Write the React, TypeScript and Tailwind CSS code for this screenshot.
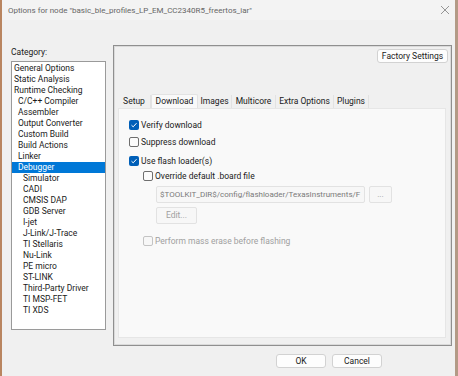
import React from "react";

const items: [string, number][] = [
  ["General Options", 0],
  ["Static Analysis", 0],
  ["Runtime Checking", 0],
  ["C/C++ Compiler", 1],
  ["Assembler", 1],
  ["Output Converter", 1],
  ["Custom Build", 1],
  ["Build Actions", 1],
  ["Linker", 1],
  ["Debugger", 1],
  ["Simulator", 2],
  ["CADI", 2],
  ["CMSIS DAP", 2],
  ["GDB Server", 2],
  ["I-jet", 2],
  ["J-Link/J-Trace", 2],
  ["TI Stellaris", 2],
  ["Nu-Link", 2],
  ["PE micro", 2],
  ["ST-LINK", 2],
  ["Third-Party Driver", 2],
  ["TI MSP-FET", 2],
  ["TI XDS", 2],
];

const indent = ["pl-[2px]", "pl-[6px]", "pl-[11px]"];

const tabs: [string, string][] = [
  ["Setup", "w-[33px]"],
  ["Download", "w-[47px]"],
  ["Images", "w-[34px]"],
  ["Multicore", "w-[44px]"],
  ["Extra Options", "w-[58px]"],
  ["Plugins", "w-[35px]"],
];

const Check = ({ checked, disabled }: { checked?: boolean; disabled?: boolean }) =>
  checked ? (
    <div className="flex h-[10px] w-[10px] items-center justify-center rounded-[2px] bg-[#005fb8]">
      <svg width="8" height="8" viewBox="0 0 8 8">
        <path d="M1.5 4.2 L3.2 5.8 L6.5 2.2" fill="none" stroke="#fff" strokeWidth="1" />
      </svg>
    </div>
  ) : (
    <div
      className={
        disabled
          ? "h-[10px] w-[10px] rounded-[2px] border border-[#c4c4c4] bg-[#f7f7f7]"
          : "h-[10px] w-[10px] rounded-[2px] border border-[#6e6e6e] bg-[#fbfbfb]"
      }
    />
  );

const Row = ({
  label,
  checked,
  disabled,
  className,
}: {
  label: string;
  checked?: boolean;
  disabled?: boolean;
  className: string;
}) => (
  <div className={`flex h-[14px] items-center gap-[2px] ${className}`}>
    <Check checked={checked} disabled={disabled} />
    <span className={disabled ? "text-[#a0a0a0]" : "text-[#1a1a1a]"}>{label}</span>
  </div>
);

export default function App() {
  return (
    <div
      className="flex h-[376px] w-[458px] text-[8.5px] leading-[11px] text-[#1a1a1a]"
      style={{ fontFamily: 'Roboto, "Noto Sans", sans-serif' }}
    >
      <div className="w-[2px] bg-[#b98560]" />
      <div className="flex w-[453px] flex-col bg-[#f0f0f0]">
        {/* title bar */}
        <div className="flex h-[20px] items-center justify-between bg-[#f3f3f3] pl-[6px] pr-[5px]">
          <span className="text-[8px] text-[#666666]">
            Options for node "basic_ble_profiles_LP_EM_CC2340R5_freertos_iar"
          </span>
          <svg width="10" height="10" viewBox="0 0 10 10">
            <path d="M1 1 L9 9 M9 1 L1 9" stroke="#8a8a8a" strokeWidth="0.9" />
          </svg>
        </div>

        <div className="flex">
          {/* category column */}
          <div className="ml-[9px] flex w-[95px] flex-col pt-[25px]">
            <div className="flex h-[14px] items-center">Category:</div>
            <div className="mt-[2px] h-[269px] border border-[#9a9a9a] bg-white pt-[1px]">
              {items.map(([name, lvl]) => (
                <div
                  key={name}
                  className={`flex h-[11px] items-center ${indent[lvl]} ${
                    name === "Debugger" ? "bg-[#0078d7] text-white" : ""
                  }`}
                >
                  {name}
                </div>
              ))}
            </div>
          </div>

          {/* options panel */}
          <div className="ml-[7px] mt-[25px] flex h-[301px] w-[339px] flex-col border border-[#8f8f8f] shadow-[inset_0_0_0_1px_#dadada]">
            <div className="flex justify-end pr-[3px] pt-[3px]">
              <div className="flex h-[14px] w-[71px] items-center justify-center whitespace-nowrap rounded-[3px] border border-[#d2d2d2] bg-[#fdfdfd]">
                Factory Settings
              </div>
            </div>

            <div className="ml-[4px] mt-[31px] flex h-[14px] items-end">
              {tabs.map(([t, w]) =>
                t === "Download" ? (
                  <div
                    key={t}
                    className={`flex h-[14px] ${w} items-center justify-center whitespace-nowrap rounded-t-[2px] border border-b-0 border-[#e3e3e3] bg-[#f9f9f9]`}
                  >
                    {t}
                  </div>
                ) : (
                  <div
                    key={t}
                    className={`flex h-[13px] ${w} items-center justify-center whitespace-nowrap border-r border-[#e2e2e2]`}
                  >
                    {t}
                  </div>
                )
              )}
            </div>

            <div className="ml-[4px] h-[230px] w-[328px] border border-[#e6e6e6] bg-[#f9f9f9]">
              <div className="flex flex-col pl-[10px]">
                <Row className="mt-[9px]" label="Verify download" checked />
                <Row className="mt-[3px]" label="Suppress download" />
                <Row className="mt-[5px]" label="Use flash loader(s)" checked />
                <div className="flex flex-col pl-[14px]">
                  <Row className="mt-[1px]" label="Override default .board file" />
                  <div className="ml-[13px] mt-[3px] flex gap-[4px]">
                    <div className="flex h-[17px] w-[209px] items-center overflow-hidden whitespace-nowrap rounded-[2px] border border-[#e2e2e2] bg-[#f7f7f7] pl-[3px] text-[8px] text-[#7a7a7a]">
                      $TOOLKIT_DIR$/config/flashloader/TexasInstruments/F
                    </div>
                    <div className="flex h-[17px] w-[23px] items-end justify-center rounded-[2px] border border-[#e2e2e2] bg-[#f7f7f7] pb-[2px] text-[#a0a0a0]">
                      ...
                    </div>
                  </div>
                  <div className="ml-[13px] mt-[4px] flex h-[17px] w-[41px] items-center justify-center rounded-[2px] border border-[#e2e2e2] bg-[#f7f7f7] text-[#a0a0a0]">
                    Edit...
                  </div>
                  <Row className="mt-[10px]" label="Perform mass erase before flashing" disabled />
                </div>
              </div>
            </div>
          </div>
        </div>

        {/* footer buttons */}
        <div className="ml-[274px] mt-[8px] flex gap-[6px]">
          <div className="flex h-[14px] w-[50px] items-center justify-center rounded-[3px] border border-[#d2d2d2] bg-[#fdfdfd]">
            OK
          </div>
          <div className="flex h-[14px] w-[50px] items-center justify-center rounded-[3px] border border-[#d2d2d2] bg-[#fdfdfd]">
            Cancel
          </div>
        </div>
      </div>
      <div className="w-[3px] bg-[#b39a86]" />
    </div>
  );
}
